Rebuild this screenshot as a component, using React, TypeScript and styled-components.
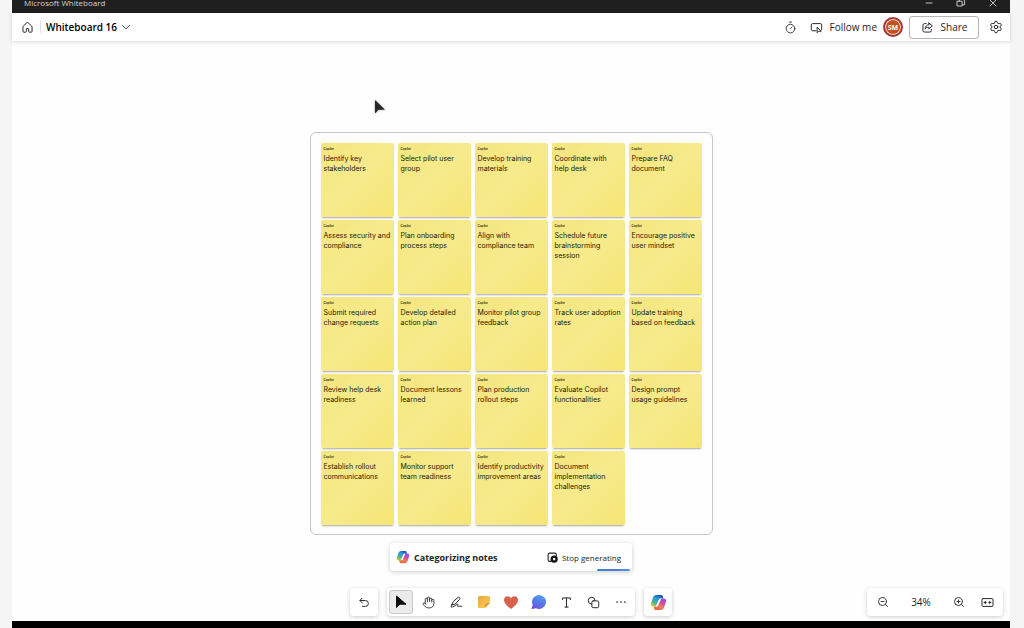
import React from "react";
import styled, { createGlobalStyle } from "styled-components";
import { Hand, Settings, Timer, ZoomIn, ZoomOut } from "lucide-react";

const GlobalStyle = createGlobalStyle`
  * { box-sizing: border-box; }
  body { margin: 0; background: #f5f5f5; font-family: "Open Sans", "Noto Sans", sans-serif; color: #242424; }
  button { font: inherit; color: inherit; border: 0; background: none; padding: 0; }
`;

const Window = styled.div`
  display: flex;
  flex-direction: column;
  min-height: 100vh;
  margin: 0 14px 0 12px;
  background: #fefefe;
`;

const TitleBar = styled.div`
  display: flex;
  align-items: flex-end;
  justify-content: space-between;
  height: 13px;
  padding: 0 11px 4px 12px;
  background: #1f1f1f;
  color: #d6d6d6;
  font-size: 8px;
  line-height: 12px;
  overflow: hidden;
`;

const WindowControls = styled.div`
  display: flex;
  gap: 20px;
`;

const CaptionButton = styled.button`
  display: flex;
  width: 12px;
  height: 12px;
`;

const Header = styled.header`
  position: relative;
  display: flex;
  align-items: center;
  justify-content: space-between;
  height: 28px;
  padding: 0 9px;
  background: #fff;
  box-shadow: 0 1px 4px rgba(0, 0, 0, 0.16);
`;

const HeaderGroup = styled.div`
  display: flex;
  align-items: center;
`;

const IconButton = styled.button`
  display: grid;
  place-items: center;
  width: 12px;
  height: 20px;
`;

const Divider = styled.span`
  width: 1px;
  height: 12px;
  margin: 0 5px 0 7px;
  background: #e2e2e2;
`;

const BoardName = styled.button`
  display: flex;
  align-items: center;
  gap: 4px;
  font-size: 10px;
  line-height: 16px;
  font-weight: 600;
  color: #000;
`;

const FollowButton = styled.button`
  display: flex;
  align-items: center;
  gap: 7px;
  margin: 0 6px 0 14px;
  font-size: 10px;
  line-height: 16px;
`;

const Avatar = styled.span`
  display: grid;
  place-items: center;
  width: 20px;
  height: 20px;
  border: 2px solid #a5363c;
  border-radius: 50%;
  background: #c4501b;
  box-shadow: inset 0 0 0 1px #fbe9e2;
  color: #fff;
  font-size: 7px;
  font-weight: 700;
`;

const ShareButton = styled.button`
  display: flex;
  align-items: center;
  justify-content: center;
  gap: 7px;
  width: 70px;
  height: 23px;
  margin: 0 10px 0 6px;
  border: 1px solid #b5b5b5;
  border-radius: 3px;
  background: #fff;
  font-size: 10px;
`;

const Canvas = styled.main`
  position: relative;
  display: flex;
  flex: 1;
  flex-direction: column;
  align-items: center;
  padding: 91px 0 5px;
`;

const Pointer = styled.svg`
  position: absolute;
  left: 362px;
  top: 58px;
  filter: drop-shadow(0 0 1px rgba(0, 0, 0, 0.4));
`;

const Frame = styled.section`
  display: grid;
  grid-template-columns: repeat(5, 73px);
  gap: 3px 4px;
  padding: 10px 10px 9px;
  border: 1px solid #c4c6c9;
  border-radius: 6px;
  background: #fefefe;
`;

const Note = styled.article`
  height: 74px;
  padding: 4px 0 0 3px;
  border-radius: 2px;
  background: linear-gradient(135deg, #f4e67e, #f6ea8c 50%, #f5e673);
  box-shadow: 0 2px 2px -1px rgba(0, 0, 0, 0.35);
  color: #1e1b08;
  font-family: Inter, "Liberation Sans", sans-serif;
`;

const Author = styled.div`
  font-size: 3px;
  line-height: 4px;
  font-weight: 600;
`;

const NoteText = styled.p`
  margin: 3px 0 0;
  font-size: 7px;
  line-height: 10px;
  white-space: pre-line;
`;

const StatusCard = styled.div`
  position: relative;
  display: flex;
  align-items: center;
  justify-content: space-between;
  width: 242px;
  height: 28px;
  margin-top: 8px;
  padding: 0 11px 0 6px;
  border-radius: 4px;
  background: #fff;
  box-shadow: 0 1px 5px rgba(0, 0, 0, 0.2);
`;

const StatusLabel = styled.div`
  display: flex;
  align-items: center;
  gap: 4px;
  font-size: 9px;
  font-weight: 700;
`;

const StopButton = styled.button`
  display: flex;
  align-items: center;
  gap: 4px;
  font-size: 8px;
`;

const Progress = styled.div`
  position: absolute;
  right: 2px;
  bottom: 0;
  width: 33px;
  height: 2px;
  border-radius: 1px;
  background: linear-gradient(90deg, #2f86c6, #5a74dd 50%, #4a9be6);
`;

const Dock = styled.footer`
  display: grid;
  grid-template-columns: 1fr auto 1fr;
  align-self: stretch;
  margin-top: auto;
  padding: 17px 7px 0;
`;

const DockCenter = styled.div`
  display: flex;
  grid-column: 2;
  gap: 9px;
`;

const Panel = styled.div`
  display: flex;
  align-items: center;
  justify-content: space-between;
  height: 28px;
  padding: 0 2px;
  border-radius: 4px;
  background: #fff;
  box-shadow: 0 1px 4px rgba(0, 0, 0, 0.2);
`;

const ToolPanel = styled(Panel)`
  width: 248px;
`;

const ZoomPanel = styled(Panel)`
  justify-self: end;
  width: 136px;
  padding: 0 10px;
  font-size: 10px;
`;

const ZoomLevel = styled.span`
  width: 40px;
  text-align: center;
`;

const ZoomTools = styled.div`
  display: flex;
  gap: 16px;
`;

const ToolButton = styled.button<{ $active?: boolean }>`
  display: grid;
  place-items: center;
  width: 24px;
  height: 24px;
  border: 1px solid ${(p) => (p.$active ? "#c9c9c9" : "transparent")};
  border-radius: 3px;
  background: ${(p) => (p.$active ? "#ebebeb" : "transparent")};
`;

const Line = ({ d, size = 12, width = 1.5 }: { d: string; size?: number; width?: number }) => (
  <svg width={size} height={size} viewBox="0 0 20 20" fill="none" stroke="currentColor" strokeWidth={width} strokeLinecap="round" strokeLinejoin="round">
    <path d={d} />
  </svg>
);

const CopilotLogo = ({ size, id }: { size: number; id: string }) => {
  const half =
    "M9 1.500h6.500c1.500 0 2.300.8 2.700 2.200L19 6.500h-3.500c-1.500 0-2.500.8-3 2.400L10.300 15c-.6 1.900-1.600 2.800-3.300 2.800H4.500c-2.600 0-3.800-2-3-4.600l2.600-8C4.900 2.800 6.400 1.500 9 1.500z";
  return (
    <svg width={size} height={size} viewBox="0 0 24 24">
      <defs>
        <linearGradient id={`${id}a`} x1="0.7" y1="0" x2="0.2" y2="1">
          <stop offset="0" stopColor="#1d4fc4" />
          <stop offset="0.35" stopColor="#2b9bdc" />
          <stop offset="0.7" stopColor="#4db58b" />
          <stop offset="1" stopColor="#d9cb3a" />
        </linearGradient>
        <linearGradient id={`${id}b`} x1="0.7" y1="0" x2="0.2" y2="1">
          <stop offset="0" stopColor="#e86a3a" />
          <stop offset="0.35" stopColor="#ee7a5c" />
          <stop offset="0.65" stopColor="#cf47a8" />
          <stop offset="1" stopColor="#8d4fe0" />
        </linearGradient>
      </defs>
      <path d={half} fill={`url(#${id}b)`} transform="rotate(180 12 12)" />
      <path d={half} fill={`url(#${id}a)`} />
      <path d="M14.200 7.500L9.800 16.500" stroke="#fff" strokeWidth="2.400" strokeLinecap="round" />
    </svg>
  );
};

const notes = [
  "Identify key\nstakeholders",
  "Select pilot user\ngroup",
  "Develop training\nmaterials",
  "Coordinate with\nhelp desk",
  "Prepare FAQ\ndocument",
  "Assess security and\ncompliance",
  "Plan onboarding\nprocess steps",
  "Align with\ncompliance team",
  "Schedule future\nbrainstorming\nsession",
  "Encourage positive\nuser mindset",
  "Submit required\nchange requests",
  "Develop detailed\naction plan",
  "Monitor pilot group\nfeedback",
  "Track user adoption\nrates",
  "Update training\nbased on feedback",
  "Review help desk\nreadiness",
  "Document lessons\nlearned",
  "Plan production\nrollout steps",
  "Evaluate Copilot\nfunctionalities",
  "Design prompt\nusage guidelines",
  "Establish rollout\ncommunications",
  "Monitor support\nteam readiness",
  "Identify productivity\nimprovement areas",
  "Document\nimplementation\nchallenges",
];

const BottomEdge = styled.div`
  height: 7px;
  background: #000;
`;

export default function App() {
  return (
    <>
      <GlobalStyle />
      <Window>
        <TitleBar>
          <span>Microsoft Whiteboard</span>
          <WindowControls>
            <CaptionButton aria-label="Minimize"><Line d="M5 10h10" /></CaptionButton>
            <CaptionButton aria-label="Restore"><Line d="M4 7h8v8H4zM7 7V4h9v9h-4" /></CaptionButton>
            <CaptionButton aria-label="Close"><Line d="M5 5l10 10M15 5L5 15" /></CaptionButton>
          </WindowControls>
        </TitleBar>
        <Header>
          <HeaderGroup>
            <IconButton aria-label="Home">
              <Line size={13} d="M3 9.200a2 2 0 0 1 .6-1.400L9 2.800a1.500 1.500 0 0 1 2 0l5.400 5a2 2 0 0 1 .6 1.400V16a1.200 1.200 0 0 1-1.200 1.200H13A1.200 1.200 0 0 1 11.800 16v-3.500a1 1 0 0 0-1-1H9.200a1 1 0 0 0-1 1V16A1.200 1.200 0 0 1 7 17.200H4.200A1.200 1.200 0 0 1 3 16z" />
            </IconButton>
            <Divider />
            <BoardName>
              Whiteboard 16
              <Line size={10} width={1.300} d="M3 7l7 7 7-7" />
            </BoardName>
          </HeaderGroup>
          <HeaderGroup>
            <IconButton aria-label="Timer"><Timer size={13} strokeWidth={1.600} /></IconButton>
            <FollowButton>
              <Line size={13} d="M9 15H4a2 2 0 0 1-2-2V6a2 2 0 0 1 2-2h12a2 2 0 0 1 2 2v7a2 2 0 0 1-1 1.700M11 10v8l2.200-2.300H16.500z" />
              Follow me
            </FollowButton>
            <Avatar>SM</Avatar>
            <ShareButton>
              <Line size={13} d="M8 4H5.500A2.500 2.500 0 0 0 3 6.500v8A2.500 2.500 0 0 0 5.500 17h8a2.500 2.500 0 0 0 2.500-2.500V13M12 3l5.500 4.500L12 12V9.500c-3 0-4.500 1-5.500 3 0-4 2-6.500 5.500-7z" />
              <span>Share</span>
            </ShareButton>
            <IconButton aria-label="Settings"><Settings size={14} strokeWidth={1.700} /></IconButton>
          </HeaderGroup>
        </Header>
        <Canvas>
          <Pointer width="12" height="16" viewBox="0 0 12 16">
            <path d="M1 1v13.500l3.500-3.800H11z" fill="#262626" />
          </Pointer>
          <Frame aria-label="Notes">
            {notes.map((text) => (
              <Note key={text}>
                <Author>Copilot</Author>
                <NoteText>{text}</NoteText>
              </Note>
            ))}
          </Frame>
          <StatusCard>
            <StatusLabel>
              <CopilotLogo size={14} id="s" />
              Categorizing notes
            </StatusLabel>
            <StopButton>
              <svg width="11" height="11" viewBox="0 0 20 20">
                <path d="M7 17H5a3 3 0 0 1-3-3V5a3 3 0 0 1 3-3h9a3 3 0 0 1 3 3v2" fill="none" stroke="#222" strokeWidth="2" strokeLinecap="round" />
                <circle cx="13" cy="13" r="6.500" fill="#111" />
                <rect x="11" y="11" width="4" height="4" fill="#fff" />
              </svg>
              Stop generating
            </StopButton>
            <Progress />
          </StatusCard>
          <Dock>
            <DockCenter>
              <Panel>
                <ToolButton aria-label="Undo">
                  <Line size={13} d="M6 3.500L3 7l3.500 3.500M3 7h8.500a4.500 4.500 0 0 1 0 9H7" />
                </ToolButton>
              </Panel>
              <ToolPanel>
                <ToolButton $active aria-label="Select">
                  <svg width="12" height="14" viewBox="0 0 12 14"><path d="M1.500 1v11.500L5 9.200h6z" fill="#0c0c0c" stroke="#0c0c0c" strokeLinejoin="round" /></svg>
                </ToolButton>
                <ToolButton aria-label="Pan"><Hand size={13} strokeWidth={1.600} /></ToolButton>
                <ToolButton aria-label="Pen">
                  <Line size={13} d="M3 13l2-4.500L12 2.500a1.800 1.800 0 0 1 2.700 2.500L8.500 12zM3 13c-1 2-1.500 3.500-1 4 2 .5 7-3 9-4 1.500-.6 1.800.3 1 1.600-.8 1.500.3 2 1.500 1.500 1.500-.8 2.500-.6 4.500-.1" />
                </ToolButton>
                <ToolButton aria-label="Sticky note">
                  <svg width="14" height="14" viewBox="0 0 14 14">
                    <defs><linearGradient id="sticky" x1="0" y1="0" x2="1" y2="1"><stop stopColor="#eda53c" /><stop offset="1" stopColor="#f8d260" /></linearGradient></defs>
                    <path d="M2.500 1h9A1.500 1.500 0 0 1 13 2.500V8l-5 5H2.500A1.500 1.500 0 0 1 1 11.500v-9A1.500 1.500 0 0 1 2.500 1z" fill="url(#sticky)" />
                    <path d="M13 8H9.500A1.500 1.500 0 0 0 8 9.500V13z" fill="#e59b38" />
                  </svg>
                </ToolButton>
                <ToolButton aria-label="Reactions">
                  <svg width="16" height="15" viewBox="0 0 16 15">
                    <path d="M8 14C5.500 12 1 8.500 1 4.900 1 2.700 2.600 1.200 4.500 1.200 6 1.200 7.300 2 8 3.300c.7-1.300 2-2.100 3.500-2.100C13.400 1.200 15 2.700 15 4.900 15 8.500 10.500 12 8 14z" fill="#d9614c" />
                  </svg>
                </ToolButton>
                <ToolButton aria-label="Comment">
                  <svg width="16" height="16" viewBox="0 0 16 16">
                    <defs><linearGradient id="bubble" x1="0.700" y1="0" x2="0.300" y2="1"><stop stopColor="#58a0ea" /><stop offset="0.500" stopColor="#557be6" /><stop offset="1" stopColor="#6f55df" /></linearGradient></defs>
                    <path d="M8 1a7 7 0 1 1-3 13.300L1.200 15a.6.6 0 0 1-.6-.8L1.700 11A7 7 0 0 1 8 1z" fill="url(#bubble)" />
                  </svg>
                </ToolButton>
                <ToolButton aria-label="Text"><Line size={13} d="M4 5.500V3h12v2.500M10 3v14M7.500 17h5" /></ToolButton>
                <ToolButton aria-label="Shapes">
                  <Line size={13} d="M7 12.500A5.300 5.300 0 1 1 12.600 7M9.500 7.500h6.500a2 2 0 0 1 2 2V16a2 2 0 0 1-2 2H9.500a2 2 0 0 1-2-2V9.500a2 2 0 0 1 2-2z" />
                </ToolButton>
                <ToolButton aria-label="More"><Line size={12} width={2.800} d="M3.500 10h.01M10 10h.01M16.500 10h.01" /></ToolButton>
              </ToolPanel>
              <Panel>
                <ToolButton aria-label="Copilot"><CopilotLogo size={17} id="d" /></ToolButton>
              </Panel>
            </DockCenter>
            <ZoomPanel>
              <IconButton aria-label="Zoom out"><ZoomOut size={12} strokeWidth={1.800} /></IconButton>
              <ZoomLevel>34%</ZoomLevel>
              <ZoomTools>
                <IconButton aria-label="Zoom in"><ZoomIn size={12} strokeWidth={1.800} /></IconButton>
                <IconButton aria-label="Fit to screen">
                  <Line size={13} d="M3 4h14a1.500 1.500 0 0 1 1.500 1.500v9A1.500 1.500 0 0 1 17 16H3a1.500 1.500 0 0 1-1.500-1.500v-9A1.500 1.500 0 0 1 3 4zM7 8l-2 2 2 2M5 10h3M13 8l2 2-2 2M15 10h-3" />
                </IconButton>
              </ZoomTools>
            </ZoomPanel>
          </Dock>
        </Canvas>
        <BottomEdge />
      </Window>
    </>
  );
}
